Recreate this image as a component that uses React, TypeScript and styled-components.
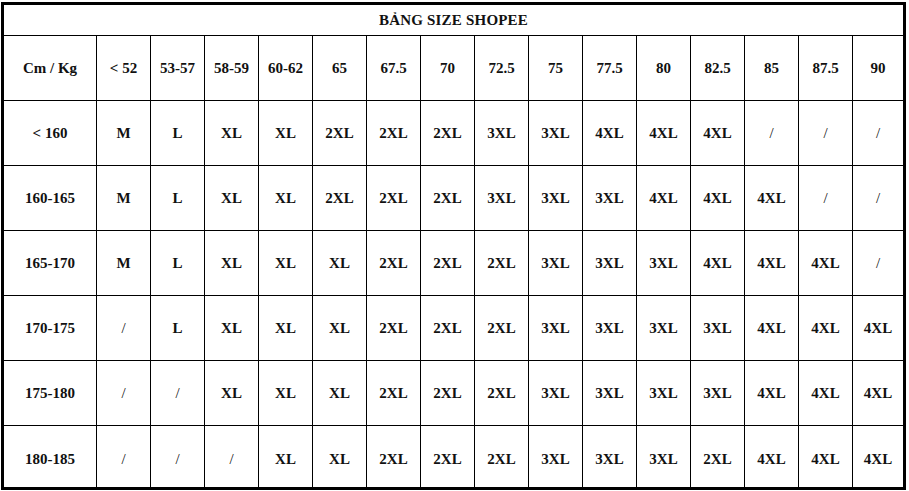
import React from "react";
import styled, { createGlobalStyle } from "styled-components";

const GlobalStyle = createGlobalStyle`
  html, body {
    margin: 0;
    padding: 0;
    background: #ffffff;
  }
  body {
    font-family: "Liberation Serif", "Times New Roman", serif;
    color: #111111;
  }
`;

const Page = styled.div`
  padding: 2px 0 0 1px;
`;

const Sheet = styled.div`
  box-sizing: border-box;
  width: 905px;
  height: 488px;
  border: 3px solid #000;
  display: grid;
  grid-template-columns: 93px repeat(14, 54px) 50px;
  grid-template-rows: 31px repeat(6, 65px) 61px;
`;

const Title = styled.div`
  grid-column: 1 / -1;
  box-sizing: border-box;
  border-bottom: 1px solid #000;
  display: flex;
  align-items: center;
  justify-content: center;
  font-size: 15px;
  font-weight: bold;
  letter-spacing: 0.2px;
`;

const Cell = styled.div<{ $lastCol: boolean; $lastRow: boolean; $empty: boolean }>`
  box-sizing: border-box;
  border-right: ${(p) => (p.$lastCol ? "none" : "1px solid #000")};
  border-bottom: ${(p) => (p.$lastRow ? "none" : "1px solid #000")};
  padding-top: ${(p) => (p.$lastRow ? "5px" : "1px")};
  display: flex;
  align-items: center;
  justify-content: center;
  font-size: 15px;
  font-weight: ${(p) => (p.$empty ? "normal" : "bold")};
  white-space: nowrap;
`;

const header = ["Cm / Kg", "< 52", "53-57", "58-59", "60-62", "65", "67.5", "70", "72.5", "75", "77.5", "80", "82.5", "85", "87.5", "90"];

const rows: string[][] = [
  ["< 160", "M", "L", "XL", "XL", "2XL", "2XL", "2XL", "3XL", "3XL", "4XL", "4XL", "4XL", "/", "/", "/"],
  ["160-165", "M", "L", "XL", "XL", "2XL", "2XL", "2XL", "3XL", "3XL", "3XL", "4XL", "4XL", "4XL", "/", "/"],
  ["165-170", "M", "L", "XL", "XL", "XL", "2XL", "2XL", "2XL", "3XL", "3XL", "3XL", "4XL", "4XL", "4XL", "/"],
  ["170-175", "/", "L", "XL", "XL", "XL", "2XL", "2XL", "2XL", "3XL", "3XL", "3XL", "3XL", "4XL", "4XL", "4XL"],
  ["175-180", "/", "/", "XL", "XL", "XL", "2XL", "2XL", "2XL", "3XL", "3XL", "3XL", "3XL", "4XL", "4XL", "4XL"],
  ["180-185", "/", "/", "/", "XL", "XL", "2XL", "2XL", "2XL", "3XL", "3XL", "3XL", "2XL", "4XL", "4XL", "4XL"],
];

const App: React.FC = () => {
  const all = [header, ...rows];
  return (
    <>
      <GlobalStyle />
      <Page>
        <Sheet>
          <Title>BẢNG SIZE SHOPEE</Title>
          {all.map((row, r) =>
            row.map((text, c) => (
              <Cell
                key={`${r}-${c}`}
                $lastCol={c === row.length - 1}
                $lastRow={r === all.length - 1}
                $empty={text === "/"}
              >
                {text}
              </Cell>
            ))
          )}
        </Sheet>
      </Page>
    </>
  );
};

export default App;
